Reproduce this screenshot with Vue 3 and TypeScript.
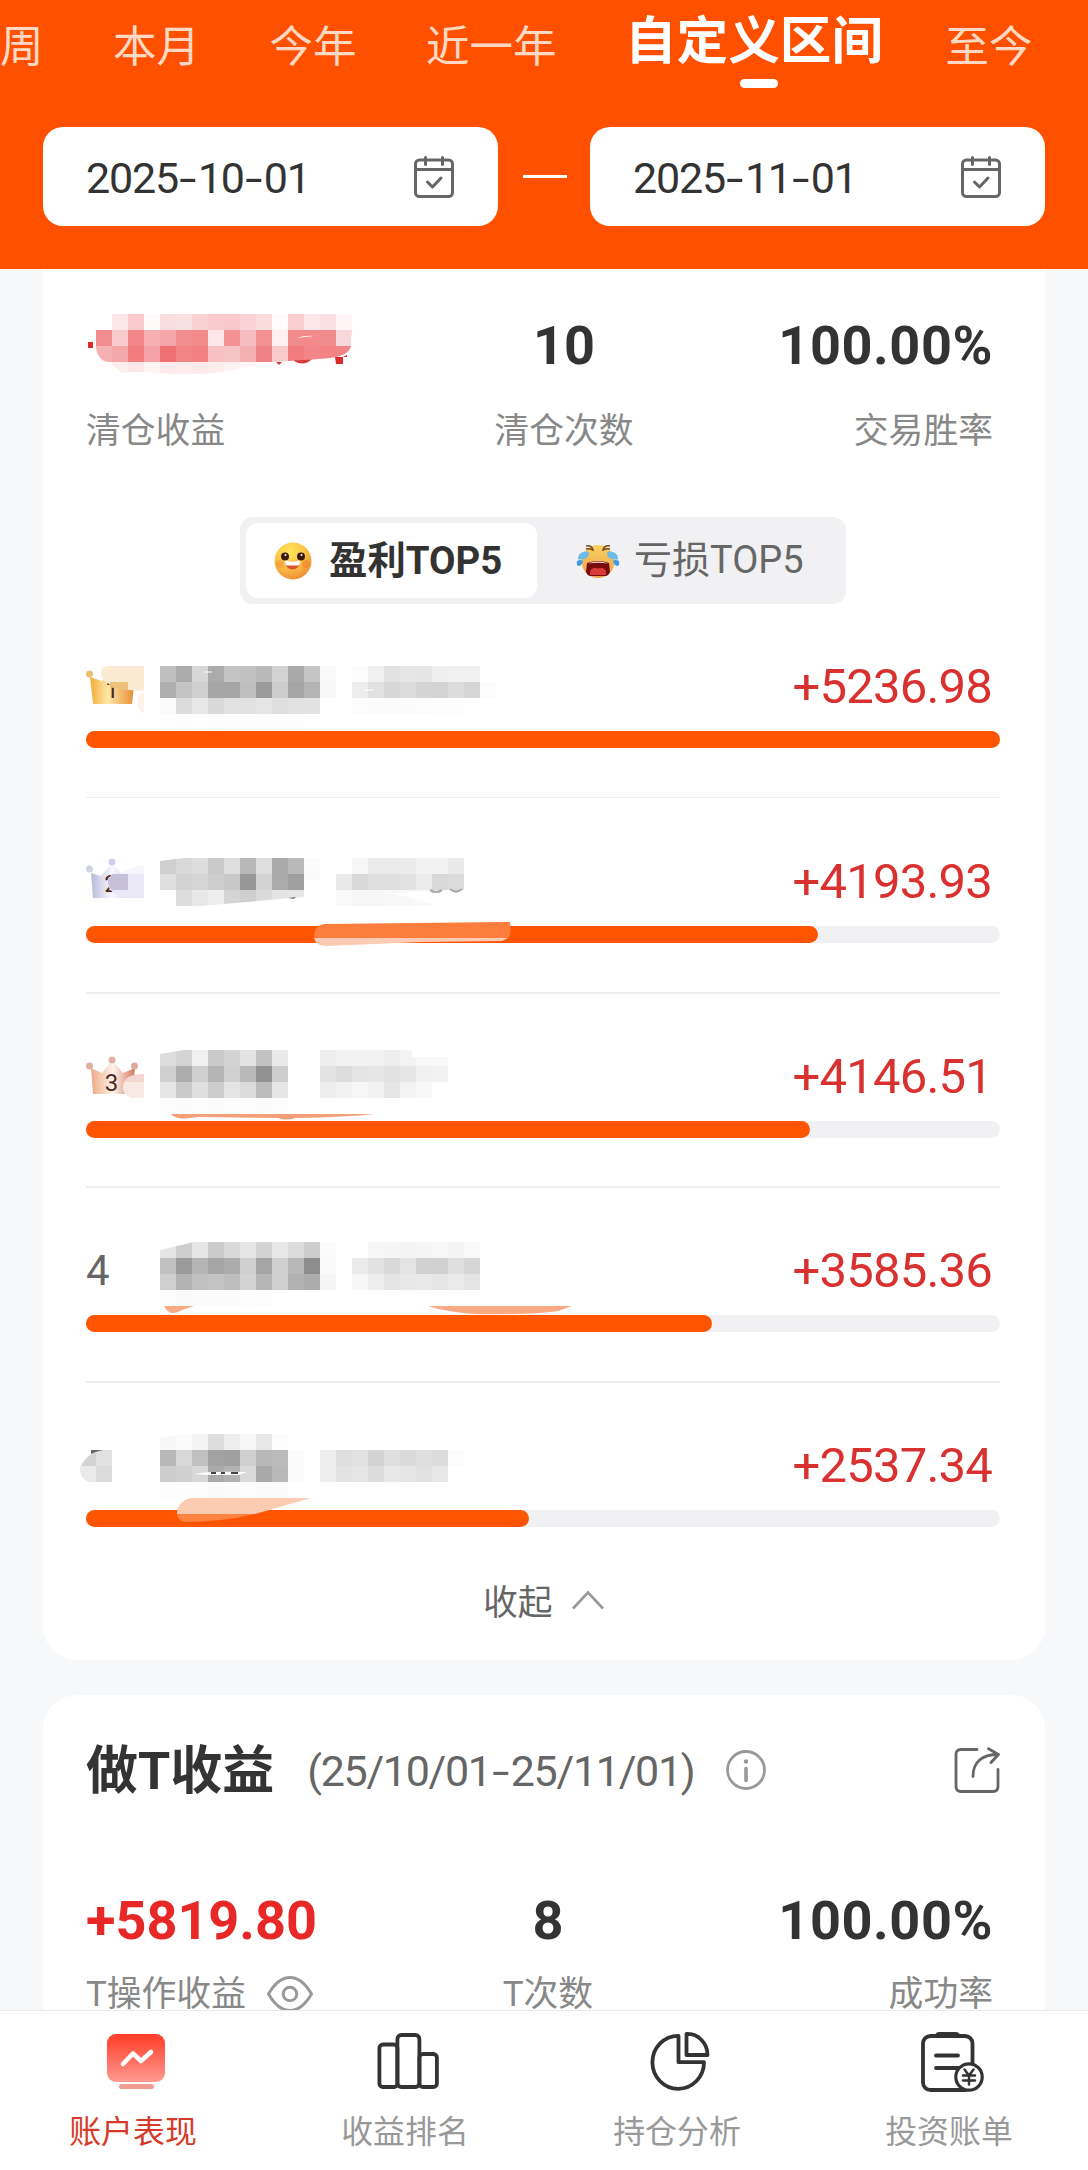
<script setup lang="ts">
interface Cell {
  x: number
  y: number
  fill: string
}

interface Strip {
  x: number
  y: number
  shades: string
}

const CELL = 16

const tabs = ['周', '本月', '今年', '近一年', '自定义区间', '至今']
const activeTab = '自定义区间'
const dates = ['2025-10-01', '2025-11-01']

const profits = [5236.98, 4193.93, 4146.51, 3585.36, 2537.34]
const rows = profits.map((value, i) => ({
  rank: i + 1,
  label: '+' + value.toFixed(2),
  width: (value / profits[0]) * 100 + '%',
}))

const nav = ['账户表现', '收益排名', '持仓分析', '投资账单']

// Grey levels of the concealed stock names, two hex digits per cell.
const strips: Strip[] = [
  { x: 160, y: 666, shades: 'bf ab d7 ab c4 c1 b9 d2 a9 c5 f9' },
  { x: 352, y: 666, shades: 'fc f0 e2 e6 e5 ef f0 f0' },
  { x: 160, y: 682, shades: 'af c4 cf a6 a6 bf 9b cc a5 b4 f8' },
  { x: 352, y: 682, shades: 'ed e1 d7 dc d4 d4 dc d5 fc' },
  { x: 160, y: 698, shades: 'fb dc e7 d9 e1 e1 e6 de e2 e2' },
  { x: 352, y: 698, shades: 'fc fb fb fb fc fd fd' },
  { x: 160, y: 714, shades: 'fe fd fe fc fd fd fd fd fd' },
  { x: 160, y: 858, shades: 'cf d8 dd c9 de b8 de aa b9 fb' },
  { x: 352, y: 858, shades: 'f6 ea ea eb f2 f2 e9' },
  { x: 160, y: 874, shades: 'df d2 d5 ce c8 97 d3 ab 9f fa' },
  { x: 336, y: 874, shades: 'e9 d9 de de e2 ec d8 db' },
  { x: 176, y: 890, shades: 'dd e8 ee d5 cf db e4 e5' },
  { x: 336, y: 890, shades: 'f9 f6 f6 f8 f8 f9' },
  { x: 160, y: 1050, shades: 'dd d4 f0 ca d3 e3 c2 e9' },
  { x: 320, y: 1050, shades: 'ee f2 f2 f2 ee f3 f8 f8' },
  { x: 160, y: 1066, shades: 'd0 ad cf b5 d1 b9 92 ce' },
  { x: 320, y: 1066, shades: 'e3 dd e4 e6 e2 e6 f0 f2' },
  { x: 160, y: 1082, shades: 'e6 ca df cd e4 dc bc e6' },
  { x: 320, y: 1082, shades: 'ed f2 f6 f2 e6 f3 f8' },
  { x: 160, y: 1098, shades: 'fc fb fc fb fc fc fb fc' },
  { x: 160, y: 1242, shades: 'e5 ce e6 cb d9 e6 d3 e8 dc cd fb' },
  { x: 368, y: 1242, shades: 'f6 f5 f4 f5 f8 f3 f9' },
  { x: 160, y: 1258, shades: 'c1 9b b4 a6 ac d0 a5 d0 b8 8d fa' },
  { x: 352, y: 1258, shades: 'ea e2 d9 e4 d1 d1 df d6' },
  { x: 160, y: 1274, shades: 'cf b3 c0 c3 bd d3 b6 cf b1 ac f5' },
  { x: 352, y: 1274, shades: 'f7 ee e4 e8 e9 e6 ea e4' },
  { x: 160, y: 1290, shades: 'fd fa fb fb fb fd fc' },
  { x: 160, y: 1434, shades: 'f7 fb f4 dd ed f7 e7 fc' },
  { x: 160, y: 1450, shades: 'b8 d8 c0 a2 a0 cf b8 bb fb' },
  { x: 320, y: 1450, shades: 'ed de e2 d3 df da df db fc' },
  { x: 160, y: 1466, shades: 'cd d0 d8 aa b2 da a9 b9 fb' },
  { x: 320, y: 1466, shades: 'ee e3 e6 dc e8 e6 e1 e7' },
  { x: 160, y: 1482, shades: 'fd fd fd fa fb fd fb fb' },
]

const nameCells: Cell[] = strips.flatMap((s) =>
  s.shades.split(' ').map((g, i) => ({ x: s.x + i * CELL, y: s.y, fill: '#' + g + g + g })),
)

const profitStrips: Strip[] = [
  {
    x: 112,
    y: 314,
    shades:
      'fbe6e8 f8cacc fffafa f8dede f9e0e0 f8d2d3 f8cacc f9c8ca f9d3d5 fadcdc fffbfc f8ced1 fce6e8 fae0e2 fff5f6',
  },
  {
    x: 96,
    y: 330,
    shades:
      'f38c8e f7cacc f28688 f6b0b2 f5a6a8 f38e90 f38b8b fce6e8 f29294 f7bcbf f29092 fff0f2 f28c8c f28a8c f18c8e f8d8da',
  },
  {
    x: 96,
    y: 346,
    shades:
      'f5b0b2 f4a8aa f07c7e f4a4a6 ee7072 f28486 f28082 f7c0c2 f7c4c6 f5b0b2 ef8284 f8caca f07c7e f28688 f28284 f1868a',
  },
  { x: 112, y: 362, shades: 'fdeeee fce6e8 fff5f5 fdeaec fdecec fceaea fdeeee fff2f2 fff5f5 fff8f8' },
]

const profitCells: Cell[] = profitStrips.flatMap((s) =>
  s.shades.split(' ').map((c, i) => ({ x: s.x + i * CELL, y: s.y, fill: '#' + c })),
)
</script>

<template>
  <div class="app">
    <header class="head">
      <nav class="tabs">
        <div v-for="t in tabs" :key="t" class="tab" :class="{ on: t === activeTab }">{{ t }}</div>
      </nav>
      <div class="range">
        <template v-for="(d, i) in dates" :key="d">
          <i v-if="i" class="dash"></i>
          <div class="date">
            <span class="day"><template v-for="(p, j) in d.split('-')" :key="j"><span v-if="j" class="hy">-</span>{{ p }}</template></span>
            <svg width="40" height="44" viewBox="0 0 40 44" fill="none" stroke="#666" stroke-width="3">
              <rect x="1.500" y="5" width="37" height="36.500" rx="4" />
              <path d="M1.500 14.500h37" />
              <path d="M11.500 2.500v7M28.500 2.500v7M13.500 27l5 5 8.500-9" stroke-linecap="round" stroke-linejoin="round" />
            </svg>
          </div>
        </template>
      </div>
    </header>

    <main class="body">
      <section class="card first">
        <div class="stats top">
          <div class="stat left">
            <div class="num cover-box">
              <svg class="cover" width="290" height="64" viewBox="86 313 290 64">
                <defs>
                  <clipPath id="profit-shape">
                    <path d="M112 314H352V333C351 336 351 340 351 345C351 350 346 355 336 357C320 360 290 360 266 363C240 369 216 375 190 374C160 374 140 370 122 373C116 368 112 363 104 361C98 357 96 352 96 346V330H112Z" />
                  </clipPath>
                </defs>
                <path d="M88 342h5v6h-5zM97 333l5 3-5 1zM335 357h12v-2l-4 2v7h-7z" fill="#e02a2a" />
                <path d="M294 359h18q-8 8-18 2zM276 362h6l-3 3z" fill="#d93a3c" />
                <g clip-path="url(#profit-shape)" shape-rendering="crispEdges">
                  <rect v-for="(c, i) in profitCells" :key="i" :x="c.x" :y="c.y" width="16" height="16" :fill="c.fill" />
                </g>
                <path d="M297 338q8-3 17-2l-9 1z" fill="#fff" />
              </svg>
            </div>
            <div class="cap">清仓收益</div>
          </div>
          <div class="stat mid"><div class="num">10</div><div class="cap">清仓次数</div></div>
          <div class="stat right"><div class="num">100.00%</div><div class="cap">交易胜率</div></div>
        </div>

        <div class="switch">
          <div class="opt on">
            <svg width="38" height="38" viewBox="0 0 38 38">
              <defs>
                <radialGradient id="smile" cx=".4" cy=".25" r=".8">
                  <stop offset="0" stop-color="#ffe65a" />
                  <stop offset=".55" stop-color="#fbc043" />
                  <stop offset="1" stop-color="#ee8738" />
                </radialGradient>
              </defs>
              <circle cx="19" cy="19" r="18.500" fill="url(#smile)" />
              <circle cx="6" cy="22" r="4" fill="#f58d3c" opacity=".5" />
              <circle cx="32" cy="22" r="4" fill="#f2702e" opacity=".5" />
              <circle cx="11" cy="14.500" r="4" fill="#3a1a10" />
              <circle cx="27" cy="14.500" r="4" fill="#3a1a10" />
              <circle cx="11.500" cy="13" r="1" fill="#fff" />
              <circle cx="27.500" cy="13" r="1" fill="#fff" />
              <path d="M11 18.500q8 2 15 0q-.5 9-7.500 9t-7.500-9z" fill="#d9552e" />
              <path d="M11 18.500q8 2 15 0q0 4.500-2 5h-11q-2-.5-2-5z" fill="#fff" />
            </svg>
            <span>盈利TOP5</span>
          </div>
          <div class="opt">
            <svg width="44" height="36" viewBox="0 0 44 36">
              <defs>
                <linearGradient id="cry" x1="0" y1="0" x2="0" y2="1">
                  <stop offset="0" stop-color="#f8d060" />
                  <stop offset="1" stop-color="#f0a04c" />
                </linearGradient>
              </defs>
              <circle cx="22" cy="18.500" r="16.500" fill="url(#cry)" />
              <path d="M10 3q6-1 7 4q-4-2-7-1M34 3q-6-1-7 4q4-2 7-1" fill="none" stroke="#7b4a22" stroke-width="1.500" />
              <path d="M13 9q0 6-5 7t-6 0q0-5 4-6.500t7-.5zM31 9q0 6 5 7t6 0q0-5-4-6.500t-7-.5z" fill="#6dbbea" />
              <path d="M1 18q4-2 6 0q-1 5-5 5q-2-2-1-5zM43 18q-4-2-6 0q1 5 5 5q2-2 1-5z" fill="#3f9ae3" />
              <path d="M11 20q11-4 22 0l1 9q-1 3-4 4H14q-3-1-4-4z" fill="#780b0b" />
              <path d="M14 32q-1-6 4-7q3-1 4 1q1-2 4-1q5 1 4 7z" fill="#d93b3b" />
              <path d="M12 20.500q10-4 20 0q-10-1.500-20 0z" fill="#f0e3dc" />
            </svg>
            <span>亏损TOP5</span>
          </div>
        </div>

        <div class="list">
          <div v-for="r in rows" :key="r.rank" class="row">
            <div class="line">
              <span class="rank">{{ r.rank === 4 ? '4' : '' }}</span>
              <span class="amount">{{ r.label }}</span>
            </div>
            <div class="track"><div class="fill" :style="{ width: r.width }"></div></div>
          </div>

          <svg class="overlay" width="924" height="974" viewBox="76 603 924 974">
            <defs>
              <linearGradient id="gold"><stop offset="0" stop-color="#f0ad38" /><stop offset=".4" stop-color="#ffe8a8" /><stop offset="1" stop-color="#e78b32" /></linearGradient>
              <linearGradient id="silver"><stop offset="0" stop-color="#b9bad9" /><stop offset=".5" stop-color="#f7f8ff" /><stop offset="1" stop-color="#cfd1ec" /></linearGradient>
              <linearGradient id="bronze"><stop offset="0" stop-color="#eda985" /><stop offset=".5" stop-color="#fff4ec" /><stop offset="1" stop-color="#d27860" /></linearGradient>
              <clipPath id="names">
                <path d="M140 603H580V858H184H580V890H464L392 893L440 906H336V880H304V897L200 906H160V861L184 858H140ZM184 858H140V820H580V858ZM184 1050L160 1054V1114H580V1057H412V1050ZM194 1242L160 1250V1306H580V1242ZM160 1438L184 1434H580V1500H160Z" />
              </clipPath>
            </defs>

            <path d="M90 677l12 4 11-11 11 11 11-4-3 27H93z" fill="url(#gold)" />
            <circle cx="89.500" cy="674" r="3.500" fill="#ecc06c" />
            <text x="112" y="698" class="crown">1</text>
            <path d="M101 672q0-6 8-6h35v25q-22 0-35-7q-8-4-8-12z" fill="#fbead3" />
            <path d="M110 682h18v8q-10 0-18-3z" fill="#edc07c" />
            <path d="M144 692v21q-7-2-7-11 0-8 7-10z" fill="#fdf2e9" />

            <path d="M91 873l10 3 11-13 9 10 12-2-3 27H93z" fill="url(#silver)" />
            <circle cx="89.500" cy="869" r="3.500" fill="#d0d2e8" />
            <circle cx="112" cy="862" r="3.500" fill="#cfd2ea" />
            <text x="111" y="892" class="crown">2</text>
            <path d="M108 882q0-8 12-8h24v24h-18q-18-4-18-16z" fill="#ebe9f7" />
            <path d="M112 874h16v16h-16q-8-8 0-16z" fill="#c6c0d8" />
            <path d="M120 874q8-7 24-9v9z" fill="#f6f6fd" />

            <path d="M91 1068l11 5 10-13 11 13 12-5-3 26H93z" fill="url(#bronze)" />
            <circle cx="89.500" cy="1066" r="3.500" fill="#ddb0a0" />
            <circle cx="112" cy="1060" r="3.500" fill="#dfb5a7" />
            <circle cx="134.500" cy="1066" r="3.500" fill="#dfaa9e" />
            <text x="111.500" y="1091" class="crown">3</text>
            <path d="M144 1074v24h-12q-10-3-9-12 1-11 21-12z" fill="#f8e9e5" />
            <path d="M144 1074v8h-20q3-8 20-8z" fill="#f3d6cf" />

            <path d="M91 1450h13l-13 8z" fill="#666" />
            <path d="M112 1450v32H90q-10-3-10-14 6-16 24-18z" fill="#e1e1e1" />
            <path d="M96 1452v14H81q5-9 15-14z" fill="#d3d3d3" />
            <path d="M80 1466h16v16h-6q-9-2-10-16z" fill="#eaeaea" />
            <path d="M96 1466h16v16H96z" fill="#dbdbdb" />

            <g clip-path="url(#names)" shape-rendering="crispEdges">
              <rect v-for="(c, i) in nameCells" :key="i" :x="c.x" :y="c.y" width="16" height="16" :fill="c.fill" />
            </g>
            <path d="M430 890q6 4 12 0M450 889q6 5 12 0" fill="none" stroke="#aaa" stroke-width="2.200" />
            <path d="M288 898l8-1-2 2z" fill="#777" />
            <path d="M204 672h8M364 690h10" stroke="#fff" stroke-width="1" />
            <path d="M194 1474q14-3 53-2l-8 3h-30z" fill="#fff" />
            <path d="M211 1473h5M221 1473h4M231 1473h7" stroke="#444" stroke-width="2" />

            <path d="M324 924l180-2h6q2 12-2 16H314q-1-12 10-14z" fill="#fd7d3d" />
            <path d="M314 938h194l-6 3-80 1-96 4q-10 0-12-8z" fill="#fbcbb5" />
            <path d="M171 1114h203q-25 3-78 4-12 3-18 0l-80-1q-22 4-27-3z" fill="#f3a078" />
            <path d="M164 1306h30l-12 4q-12 8-18-4zM428 1306h144l-14 5q-26 4-84 3-32-3-46-8z" fill="#faab84" />
            <path d="M190 1498h121l-42 12-14 4H177q0-12 13-16z" fill="#fbccb2" />
            <path d="M177 1514h78q-33 8-71 8-6-2-7-8z" fill="#ff8342" />
          </svg>
        </div>

        <div class="collapse">
          <span>收起</span>
          <svg width="32" height="20" viewBox="0 0 32 20" fill="none" stroke="#999" stroke-width="2.600"><path d="M1 18.500L16 2.500l15 16" /></svg>
        </div>
      </section>

      <section class="card second">
        <div class="title">
          <h2>做T收益</h2>
          <span class="period">(25/10/01<span class="hy">-</span>25/11/01)</span>
          <svg class="info" width="40" height="40" viewBox="0 0 40 40" fill="none" stroke="#999" stroke-width="2.800">
            <circle cx="20" cy="20" r="18.500" />
            <path d="M20 18.500v12" stroke-width="3.600" stroke-linecap="round" />
            <circle cx="20" cy="11.500" r="2.200" fill="#999" stroke="none" />
          </svg>
          <svg class="share" width="46" height="46" viewBox="0 0 46 46" fill="none" stroke="#666" stroke-width="2.800" stroke-linecap="round" stroke-linejoin="round">
            <path d="M23 2.500H7q-5 0-5 5v32q0 5 5 5h32q5 0 5-5V22.500" />
            <path d="M19 29.500C19 15 28 7.500 44 7.500M34.500 1.800L44.500 7.500 37 15.500" />
          </svg>
        </div>
        <div class="stats bottom">
          <div class="stat left">
            <div class="num red">+5819.80</div>
            <div class="cap">
              T操作收益
              <svg width="46" height="36" viewBox="0 0 46 36" fill="none" stroke="#999" stroke-width="3">
                <path d="M1.500 18Q11 1.500 23 1.500T44.500 18Q35 34.500 23 34.500T1.500 18z" stroke-linejoin="round" />
                <circle cx="23" cy="18" r="6.800" />
              </svg>
            </div>
          </div>
          <div class="stat mid"><div class="num">8</div><div class="cap">T次数</div></div>
          <div class="stat right"><div class="num">100.00%</div><div class="cap">成功率</div></div>
        </div>
      </section>
    </main>

    <footer class="nav">
      <div v-for="(n, i) in nav" :key="n" class="item" :class="{ on: i === 0 }">
        <svg v-if="i === 0" width="64" height="64" viewBox="0 0 64 64">
          <defs><linearGradient id="scr" x1="0" y1="0" x2="0" y2="1"><stop offset="0" stop-color="#ff3c26" /><stop offset="1" stop-color="#ff9a90" /></linearGradient></defs>
          <rect x="3" y="4" width="58" height="48" rx="9" fill="url(#scr)" />
          <path d="M19 34l10-10.500 8 7.500 10-9" fill="none" stroke="#fff" stroke-width="4.500" stroke-linecap="round" stroke-linejoin="round" />
          <rect x="15" y="54" width="35" height="5" rx="2.500" fill="#f09c90" />
        </svg>
        <svg v-else-if="i === 1" width="64" height="64" viewBox="0 0 64 64" fill="none" stroke="#333" stroke-width="3.800">
          <rect x="3.400" y="14.500" width="18" height="42.500" rx="3.500" />
          <rect x="21.400" y="5" width="22" height="52" rx="4" />
          <rect x="43.400" y="24" width="17.500" height="33" rx="3.500" />
        </svg>
        <svg v-else-if="i === 2" width="64" height="64" viewBox="0 0 64 64" fill="none" stroke="#333" stroke-width="3.800">
          <path d="M30.500 5.800A25.800 26.500 0 1 0 56 32.200H30.500z" stroke-linejoin="round" />
          <path d="M38.500 4A20 21 0 0 1 59.500 25H38.500z" stroke-linejoin="round" />
        </svg>
        <svg v-else width="64" height="64" viewBox="0 0 64 64" fill="none" stroke="#333" stroke-width="3.800">
          <rect x="3" y="6" width="49.500" height="54" rx="7.500" />
          <path d="M19 2h17q3 0 4 3l-2 3H17l-2-3q1-3 4-3z" fill="#333" stroke="none" />
          <path d="M16 25.500h22M16 38h22" stroke-linecap="round" />
          <circle cx="49" cy="47" r="13.200" fill="#fff" stroke-width="3.200" />
          <path d="M44.500 39.500l4.500 6 4.500-6M49 45.500v9M43 45.500h12M43 50.500h12" stroke-width="2.500" stroke-linecap="round" />
        </svg>
        <span>{{ n }}</span>
      </div>
    </footer>
  </div>
</template>

<style>
body {
  background: #f6f7f9;
}
</style>

<style scoped>
.app {
  display: flex;
  flex-direction: column;
  width: 1088px;
  height: 2170px;
  overflow: hidden;
  font-family: Roboto, "Noto Sans CJK SC", sans-serif;
  color: #333;
  background: #f6f8fa;
}
svg {
  display: block;
  flex: none;
}
.head {
  flex: none;
  height: 269px;
  background: #ff5000;
}
.tabs {
  display: flex;
  gap: 69.5px;
  height: 127px;
}
.tab {
  flex: none;
  font-size: 43.5px;
  line-height: 96px;
  color: #ffd9c4;
}
.tab.on {
  position: relative;
  margin: 0 -7px 0 -1px;
  font-size: 51.6px;
  line-height: 83px;
  font-weight: 700;
  color: #fff;
}
.tab.on::after {
  content: "";
  position: absolute;
  left: 50%;
  top: 79px;
  width: 38px;
  height: 9px;
  margin-left: -14px;
  border-radius: 5px;
  background: #fff;
}
.range {
  display: flex;
  align-items: center;
  justify-content: space-between;
  padding: 0 43px;
}
.date {
  display: flex;
  align-items: center;
  justify-content: space-between;
  box-sizing: border-box;
  width: 455px;
  height: 99px;
  padding: 0 44px 0 43px;
  border-radius: 20px;
  background: #fff;
  font-size: 43px;
  line-height: 99px;
}
.day {
  padding-top: 4px;
  letter-spacing: -1.2px;
}
.hy {
  display: inline-block;
  width: 20px;
  letter-spacing: 0;
  text-align: center;
  transform: scaleX(1.45);
}
.dash {
  width: 44px;
  height: 3px;
  margin-left: 2px;
  background: #fff;
}
.body {
  flex: 1;
  min-height: 0;
  overflow: hidden;
  padding: 0 43px;
}
.card {
  background: #fff;
}
.first {
  box-sizing: border-box;
  height: 1391px;
  padding: 44px 45px 0 43px;
  border-radius: 0 0 34px 34px;
}
.stats {
  display: grid;
}
.top {
  grid-template-columns: 408px 140px 359px;
}
.bottom {
  grid-template-columns: 392px 140px 375px;
}
.num {
  box-sizing: border-box;
  height: 64px;
  padding-top: 1px;
  font-size: 54px;
  line-height: 64px;
  font-weight: 700;
}
.cover-box {
  padding-top: 0;
}
.red {
  color: #e82727;
}
.cap {
  display: flex;
  gap: 21px;
  align-items: center;
  margin-top: 29px;
  font-size: 34.8px;
  line-height: 50px;
  height: 50px;
  color: #888;
}
.mid {
  text-align: center;
}
.mid .cap {
  justify-content: center;
}
.right {
  text-align: right;
}
.right .num {
  letter-spacing: 0.6px;
}
.right .cap {
  justify-content: flex-end;
}
.switch {
  display: flex;
  box-sizing: border-box;
  width: 606px;
  height: 87px;
  margin: 61px 0 0 154px;
  padding: 6px;
  border-radius: 13px;
  background: #f1f1f4;
}
.opt {
  display: flex;
  align-items: center;
  box-sizing: border-box;
  width: 291px;
  height: 75px;
  padding-left: 28px;
  gap: 17px;
  border-radius: 12px;
  font-size: 38px;
  line-height: 77px;
  color: #666;
}
.opt + .opt {
  padding-left: 39px;
  gap: 14px;
}
.opt.on {
  background: #fff;
  font-size: 38.4px;
  line-height: 79px;
  font-weight: 700;
  color: #333;
}
.list {
  position: relative;
  width: 914px;
  margin-top: -1px;
}
.row {
  box-sizing: border-box;
  height: 194.75px;
  padding-top: 54px;
  border-bottom: 1px solid #eee;
}
.row:nth-child(n + 2) {
  box-shadow: 0 1px #eee;
}
.row:nth-child(5) {
  border-bottom-color: transparent;
  box-shadow: none;
}
.line {
  display: flex;
  justify-content: space-between;
  height: 74px;
  line-height: 60px;
  padding-right: 8px;
}
.rank {
  font-size: 42px;
  color: #666;
}
.amount {
  font-size: 49px;
  letter-spacing: -0.8px;
  color: #d93030;
}
.track {
  height: 17px;
  border-radius: 9px;
  background: #f1f1f4;
}
.fill {
  height: 17px;
  border-radius: 9px;
  background: #ff5500;
}
.overlay {
  position: absolute;
  left: -10px;
  top: 0;
}
.crown {
  font-size: 24px;
  fill: #4b2a22;
  text-anchor: middle;
}
.collapse {
  display: flex;
  align-items: center;
  height: 54px;
  margin: -4px 0 0 397px;
  gap: 19px;
  font-size: 34.8px;
  color: #666;
}
.second {
  height: 500px;
  margin-top: 35px;
  padding: 39px 45px 0 43px;
  border-radius: 34px 34px 0 0;
}
.title {
  display: flex;
  align-items: center;
  height: 72px;
}
h2 {
  margin: 0;
  padding-top: 4px;
  font-size: 52px;
  line-height: 72px;
}
.period {
  margin-left: 33px;
  padding-top: 1px;
  font-size: 43px;
  line-height: 72px;
  letter-spacing: -1.3px;
  color: #666;
}
.info {
  margin-left: 31px;
}
.share {
  margin: 0 0 0 auto;
}
.bottom {
  margin-top: 82px;
}
.bottom .cap {
  margin-top: 17px;
}
.nav {
  display: flex;
  flex: none;
  box-sizing: border-box;
  height: 160px;
  border-top: 1px solid #e9ebee;
  background: #fff;
}
.item {
  display: flex;
  flex-direction: column;
  align-items: center;
  width: 272px;
  padding-top: 19px;
  font-size: 31.9px;
  line-height: 46px;
  color: #999;
}
.item span {
  margin: 15px 6px 0 0;
}
.item.on span {
  color: #d63b2a;
}
</style>
